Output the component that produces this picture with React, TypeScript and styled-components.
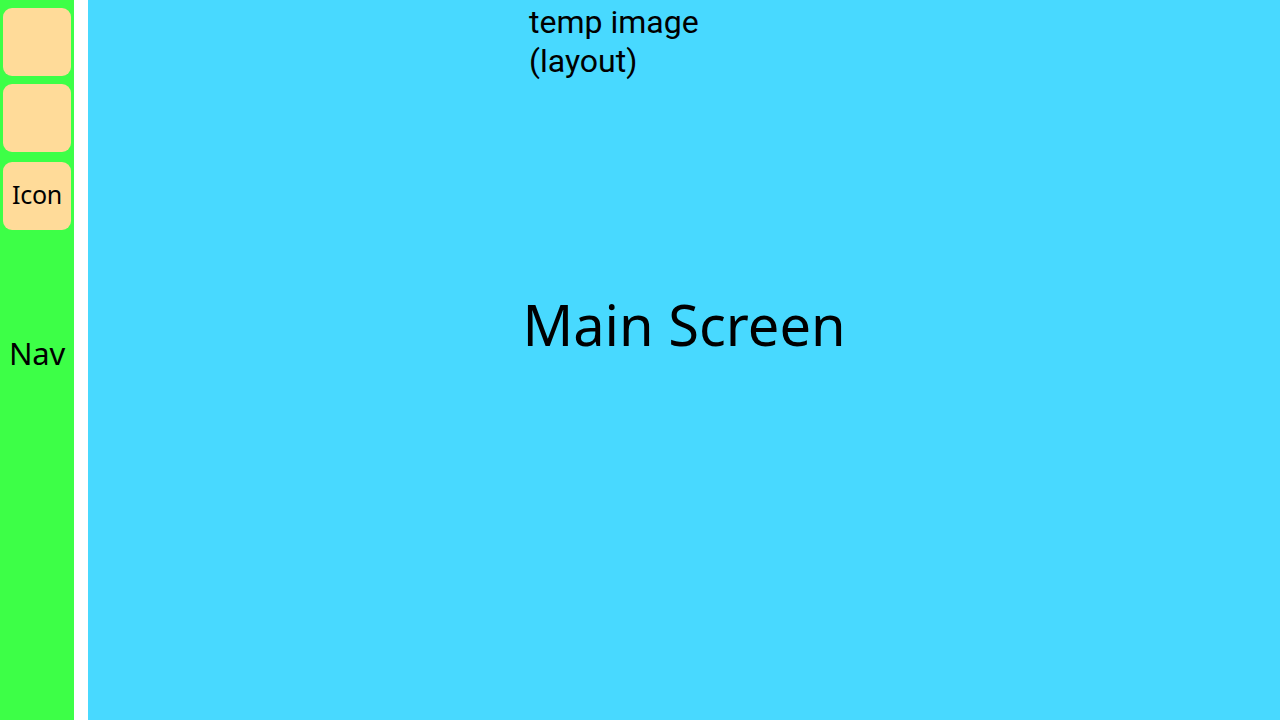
import React from "react";
import styled, { createGlobalStyle } from "styled-components";

const Global = createGlobalStyle`
  html, body { margin: 0; padding: 0; background: #ffffff; }
  body { font-family: "Noto Sans", "Open Sans", sans-serif; color: #000; }
`;

const Page = styled.div`
  display: flex;
  width: 1280px;
  height: 720px;
  overflow: hidden;
  background: #ffffff;
`;

const Nav = styled.nav`
  width: 74px;
  height: 720px;
  background: #3dff47;
  display: flex;
  flex-direction: column;
  align-items: center;
  padding-top: 8px;
  box-sizing: border-box;
  margin-right: 14px;
`;

const IconButton = styled.div<{ $gap?: number }>`
  width: 68px;
  height: 68px;
  border-radius: 9px;
  background: #ffdb99;
  margin-bottom: ${(p) => p.$gap ?? 8}px;
  display: flex;
  align-items: center;
  justify-content: center;
  box-sizing: border-box;
  padding-bottom: 5px;
  font-family: "Noto Sans", sans-serif;
  font-size: 25px;
  letter-spacing: -0.3px;
`;

const NavLabel = styled.div`
  margin-top: 94px;
  font-family: "Noto Sans", sans-serif;
  font-size: 31px;
  line-height: 42px;
  letter-spacing: -0.3px;
`;

const Main = styled.main`
  flex: 1;
  height: 720px;
  background: #48d9ff;
  display: flex;
  flex-direction: column;
  align-items: center;
`;

const TempImage = styled.div`
  align-self: flex-start;
  margin-left: 441px;
  margin-top: 3px;
  font-family: Roboto, sans-serif;
  font-size: 32px;
  line-height: 39px;
`;

const Title = styled.h1`
  margin: 205px 0 0 0;
  font-family: "Noto Sans", sans-serif;
  font-weight: 400;
  font-size: 56px;
  line-height: 76px;
`;

export default function App() {
  return (
    <>
      <Global />
      <Page>
        <Nav>
          <IconButton />
          <IconButton $gap={10} />
          <IconButton>Icon</IconButton>
          <NavLabel>Nav</NavLabel>
        </Nav>
        <Main>
          <TempImage>
            temp image
            <br />
            (layout)
          </TempImage>
          <Title>Main Screen</Title>
        </Main>
      </Page>
    </>
  );
}
